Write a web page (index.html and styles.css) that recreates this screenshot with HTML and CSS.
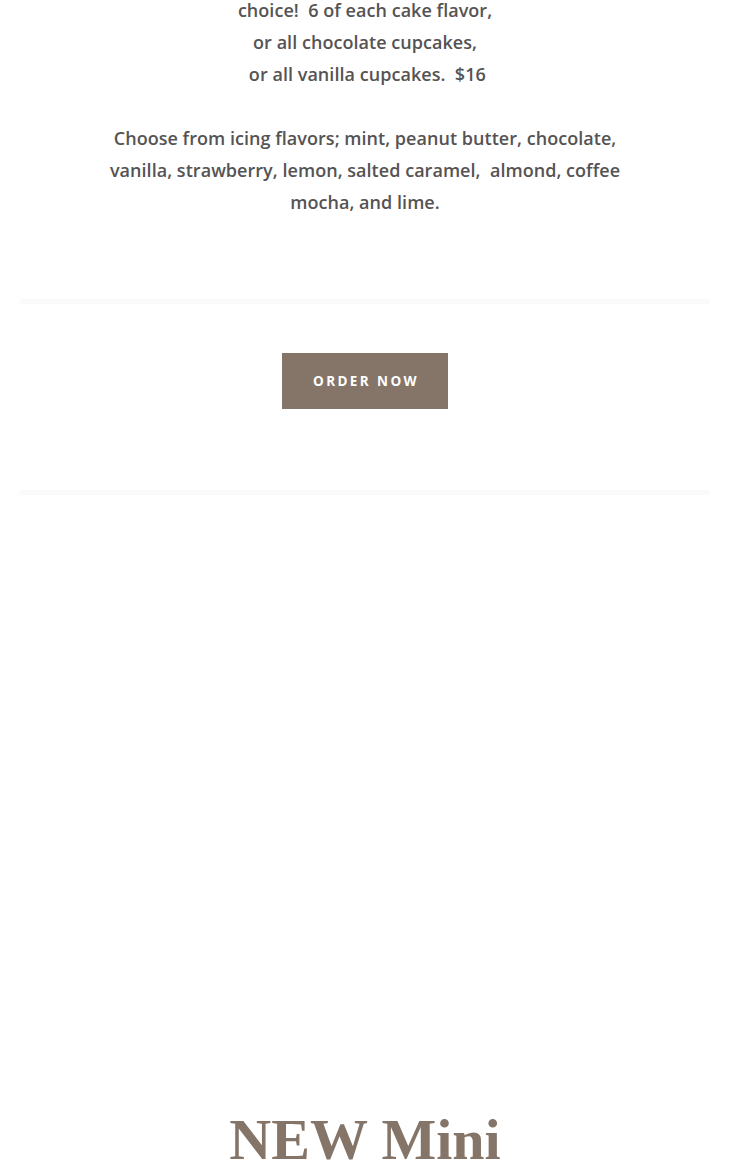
FILE: index.html
```html
<!DOCTYPE html>
<html lang="en">
<head>
<meta charset="utf-8">
<title>Cupcakes</title>
<link rel="stylesheet" href="styles.css">
</head>
<body>
<main class="page">
  <section class="copy">
    <p class="para">choice!&nbsp; 6 of each cake flavor,<br>or all chocolate cupcakes,<br>&nbsp;or all vanilla cupcakes.&nbsp; $16</p>
    <p class="para para-wide">Choose from icing flavors; mint, peanut butter, chocolate, vanilla, strawberry, lemon, salted caramel,&nbsp; almond, coffee mocha, and lime.</p>
  </section>
  <hr class="divider divider-top">
  <div class="action">
    <a class="btn" href="#">ORDER NOW</a>
  </div>
  <hr class="divider divider-bottom">
  <div class="spacer"></div>
  <h2 class="title">NEW Mini</h2>
</main>
</body>
</html>
```

FILE: styles.css
```css
html, body {
  margin: 0;
  padding: 0;
  background: #ffffff;
  overflow: hidden;
}

.page {
  width: 690px;
  margin-left: 20px;
  display: flex;
  flex-direction: column;
  align-items: stretch;
}

.copy {
  margin-top: -6px;
  display: flex;
  flex-direction: column;
  align-items: center;
  gap: 32px;
  font-family: "Open Sans", "Liberation Sans", sans-serif;
  font-weight: 600;
  font-size: 18px;
  line-height: 32px;
  letter-spacing: 0.04px;
  color: #555353;
  text-align: center;
}

.para {
  margin: 0;
}

.para-wide {
  width: 540px;
}

.divider {
  border: 0;
  height: 5px;
  background: #fafafa;
  margin: 0;
}

.divider-top {
  margin-top: 81px;
}

.action {
  display: flex;
  justify-content: center;
  padding: 49px 0 81px;
}

.btn {
  display: flex;
  align-items: center;
  justify-content: center;
  width: 166px;
  height: 56px;
  background: #857569;
  color: #ffffff;
  font-family: "Open Sans", "Liberation Sans", sans-serif;
  font-weight: 700;
  font-size: 13.5px;
  letter-spacing: 2.4px;
  text-decoration: none;
  text-indent: 2px;
}

.spacer {
  height: 605px;
}

.title {
  margin: 0;
  text-align: center;
  font-family: "Liberation Serif", "DejaVu Serif", serif;
  font-weight: 700;
  font-size: 58px;
  line-height: 80px;
  color: #857569;
}
```
